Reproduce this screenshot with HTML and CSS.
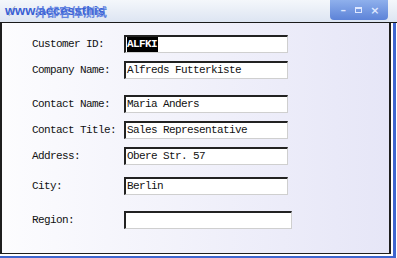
FILE: index.html
```html
<!DOCTYPE html>
<html lang="en">
<head>
  <meta charset="UTF-8" />
  <title>Customers</title>
  <link rel="stylesheet" href="styles.css">
</head>
<body>
  <div class="window">
    <div class="titlebar">
      <svg class="app-icon" width="10" height="12" viewBox="0 0 10 12">
        <path d="M8 1 L3 7 L2 11 L5 8 Z" fill="none" stroke="#b8c0cc" stroke-width="1"/>
      </svg>
      <div class="title">
        <span class="title-en">www.accessthis</span>
        <span class="title-cn">外部容体测试</span>
      </div>
      <div class="controls">
        <span class="ctl">&#8211;</span>
        <span class="ctl box"></span>
        <span class="ctl">&#215;</span>
      </div>
    </div>

    <div class="frame">
      <div class="client">
        <div class="row">
          <label>Customer ID:</label>
          <div class="textbox"><span class="sel">ALFKI</span></div>
        </div>
        <div class="row">
          <label>Company Name:</label>
          <div class="textbox">Alfreds Futterkiste</div>
        </div>
        <div class="row wide">
          <label>Contact Name:</label>
          <div class="textbox">Maria Anders</div>
        </div>
        <div class="row">
          <label>Contact Title:</label>
          <div class="textbox">Sales Representative</div>
        </div>
        <div class="row">
          <label>Address:</label>
          <div class="textbox">Obere Str. 57</div>
        </div>
        <div class="row mid">
          <label>City:</label>
          <div class="textbox">Berlin</div>
        </div>
        <div class="row wide">
          <label>Region:</label>
          <div class="textbox long"></div>
        </div>
      </div>
    </div>
  </div>
</body>
</html>
```

FILE: styles.css
```css
* {
  margin: 0;
  padding: 0;
  box-sizing: border-box;
}

body {
  background: #fff;
  font-family: 'Liberation Mono', monospace;
  font-size: 11px;
  letter-spacing: -0.6px;
  color: #111;
}

.window {
  width: 397px;
  height: 258px;
  display: flex;
  flex-direction: column;
}

/* title bar */
.titlebar {
  height: 23px;
  border-bottom: 1px solid #1a1a1a;
  background: linear-gradient(#f4f7fb, #dde5f2);
  display: flex;
  align-items: center;
  padding-left: 7px;
}

.app-icon {
  margin-right: -12px;
}

.title {
  position: relative;
  font-family: 'Liberation Sans', sans-serif;
  font-weight: bold;
  font-size: 13px;
  letter-spacing: 0;
  line-height: 14px;
  color: #3a5fd4;
  margin-top: -1px;
}

.title-cn {
  position: absolute;
  left: 30px;
  top: 1px;
  color: #4f74dc;
  opacity: 0.85;
  font-family: 'Noto Sans CJK SC', sans-serif;
  font-size: 12px;
  line-height: 14px;
  white-space: nowrap;
}

.controls {
  margin-left: auto;
  margin-right: 9px;
  align-self: flex-start;
  width: 58px;
  height: 20px;
  background: linear-gradient(#8fb0ec, #5d83d8);
  border-radius: 0 0 4px 4px;
  display: flex;
  align-items: center;
  justify-content: space-around;
  padding: 0 4px;
}

.ctl {
  color: #dfe8ff;
  font-family: 'DejaVu Sans', sans-serif;
  font-weight: bold;
  font-size: 11px;
  letter-spacing: 0;
  line-height: 1;
  width: 12px;
  text-align: center;
}

.ctl.box {
  width: 7px;
  height: 6px;
  border: 1px solid #dfe8ff;
  border-top-width: 2px;
}

/* window body */
.frame {
  flex: 1;
  display: flex;
  background: #fff;
  padding: 0 2px 2px 0;
  border-right: 3px solid #3f66cf;
  border-bottom: 2px solid #3f66cf;
  margin-right: 1px;
}

.client {
  flex: 1;
  border-left: 2px solid #1e1e1e;
  border-right: 2px solid #1e1e1e;
  border-bottom: 1px solid #1e1e1e;
  background: linear-gradient(90deg, #fcfcfe, #e6e6f7);
  padding: 12px 0 0 30px;
}

.row {
  display: flex;
  align-items: center;
  height: 18px;
  margin-top: 8px;
}

.row:first-child {
  margin-top: 0;
}

.row.mid {
  margin-top: 12px;
}

.row.wide {
  margin-top: 16px;
}

label {
  width: 92px;
}

.textbox {
  width: 164px;
  height: 18px;
  background: #fff;
  border-top: 2px solid #222;
  border-left: 2px solid #222;
  border-right: 1px solid #cfcfcf;
  border-bottom: 1px solid #cfcfcf;
  padding: 0 0 0 1px;
  line-height: 15px;
  white-space: nowrap;
}

.textbox.long {
  width: 168px;
}

.sel {
  display: inline-block;
  background: #000;
  color: #fff;
  font-weight: bold;
  padding: 0 1px 0 0;
}
```
